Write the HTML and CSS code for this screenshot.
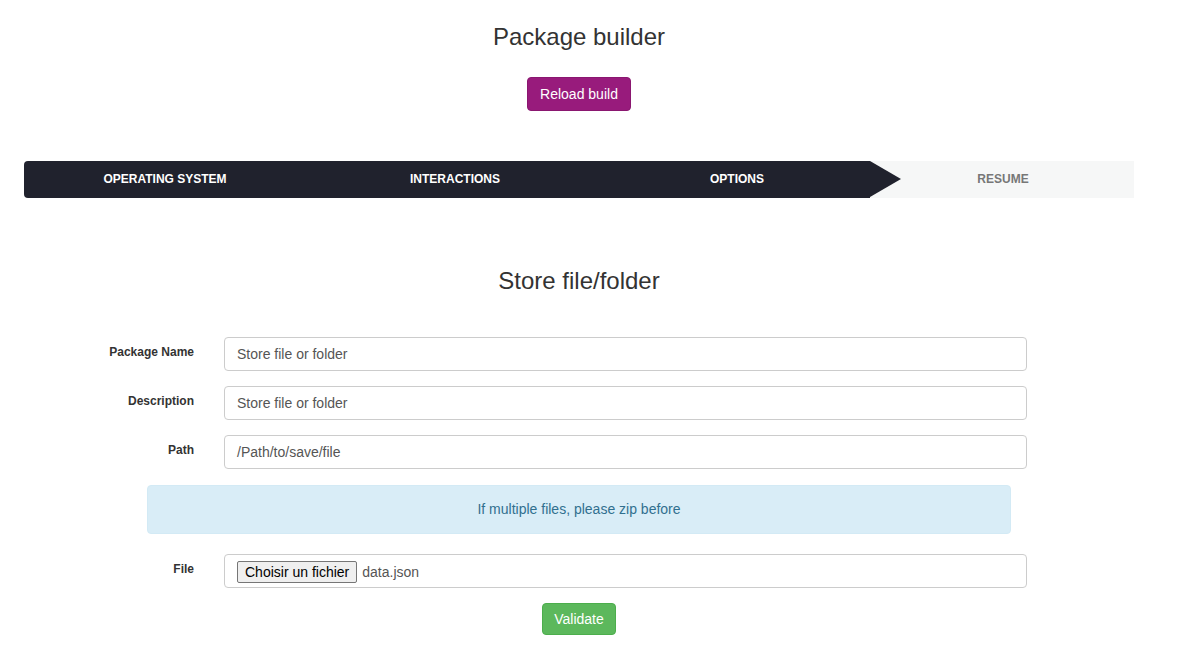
FILE: index.html
```html
<!DOCTYPE html>
<html>
<head>
<meta charset="utf-8">
<link rel="stylesheet" href="styles.css">
</head>
<body>
<div class="page">
  <h1 class="title">Package builder</h1>
  <div class="center">
    <button class="btn btn-purple">Reload build</button>
  </div>

  <div class="stepper">
    <div class="step done">OPERATING SYSTEM</div>
    <div class="step done">INTERACTIONS</div>
    <div class="step done current">OPTIONS</div>
    <div class="step todo">RESUME</div>
  </div>

  <h2 class="subtitle">Store file/folder</h2>

  <form class="form">
    <div class="row">
      <label class="label">Package Name</label>
      <div class="input">Store file or folder</div>
    </div>
    <div class="row">
      <label class="label">Description</label>
      <div class="input">Store file or folder</div>
    </div>
    <div class="row">
      <label class="label">Path</label>
      <div class="input">/Path/to/save/file</div>
    </div>
    <div class="alert">If multiple files, please zip before</div>
    <div class="row">
      <label class="label">File</label>
      <div class="input file-input"><span class="file-btn">Choisir un fichier</span><span class="file-name">data.json</span></div>
    </div>
    <div class="center">
      <button type="button" class="btn btn-green">Validate</button>
    </div>
  </form>
</div>
</body>
</html>
```

FILE: styles.css
```css
* { box-sizing: border-box; }
html, body { margin: 0; padding: 0; background: #fff; }
body {
  font-family: "Liberation Sans", Arial, sans-serif;
  font-size: 14px;
  color: #333;
}
.page {
  width: 1110px;
  margin-left: 24px;
}
.center { display: flex; justify-content: center; }
.title {
  margin: 0;
  padding-top: 24px;
  font-size: 24px;
  font-weight: 400;
  line-height: 26px;
  text-align: center;
  color: #333;
}
.btn {
  font-family: "Liberation Sans", Arial, sans-serif;
  font-size: 14px;
  color: #fff;
  border: 1px solid transparent;
  border-radius: 4px;
  line-height: 20px;
  cursor: pointer;
}
.btn-purple {
  margin-top: 27px;
  height: 34px;
  padding: 6px 12px;
  background: #981b7c;
  border-color: #8a1770;
}
.btn-green {
  height: 32px;
  padding: 5px 11px;
  background: #5cb85c;
  border-color: #4cae4c;
}
.stepper {
  margin-top: 50px;
  height: 37px;
  display: grid;
  grid-template-columns: 282px 298px 266px 1fr;
}
.step {
  position: relative;
  display: flex;
  align-items: center;
  justify-content: center;
  padding-bottom: 2px;
  font-size: 12px;
  font-weight: 700;
  text-transform: uppercase;
}
.step.done { background: #20222d; color: #fff; }
.step.done:first-child { border-radius: 4px 0 0 4px; }
.step.todo { background: #f6f7f7; color: #777; padding-left: 2px; }
.step.current::after {
  content: "";
  position: absolute;
  right: -31px;
  top: 0;
  width: 0;
  height: 0;
  border-top: 18.5px solid transparent;
  border-bottom: 18.5px solid transparent;
  border-left: 31px solid #20222d;
  z-index: 2;
}
.subtitle {
  margin: 70px 0 0;
  font-size: 24px;
  font-weight: 400;
  line-height: 26px;
  text-align: center;
  color: #333;
}
.form {
  margin-top: 43px;
  display: flex;
  flex-direction: column;
}
.row {
  display: grid;
  grid-template-columns: 170px 803px;
  column-gap: 30px;
  margin-bottom: 15px;
}
.label {
  text-align: right;
  font-size: 12px;
  font-weight: 700;
  padding-top: 8px;
  color: #333;
}
.input {
  height: 34px;
  border: 1px solid #ccc;
  border-radius: 4px;
  padding: 6px 12px;
  line-height: 20px;
  font-size: 14px;
  color: #555;
  background: #fff;
}
.alert {
  margin: 1px 0 20px 123px;
  width: 864px;
  height: 49px;
  display: flex;
  align-items: center;
  justify-content: center;
  padding-bottom: 2px;
  background: #d9edf7;
  border: 1px solid #d3eaf5;
  border-radius: 4px;
  color: #31708f;
  font-size: 14px;
}
.file-input {
  display: flex;
  align-items: center;
  padding: 1px 12px 0;
}
.file-btn {
  display: inline-block;
  height: 22px;
  line-height: 20px;
  padding: 0 7px;
  background: #efefef;
  border: 1px solid #767676;
  border-radius: 2px;
  color: #000;
  font-size: 14px;
  margin-right: 5px;
}
.file-name { color: #555; }
```
